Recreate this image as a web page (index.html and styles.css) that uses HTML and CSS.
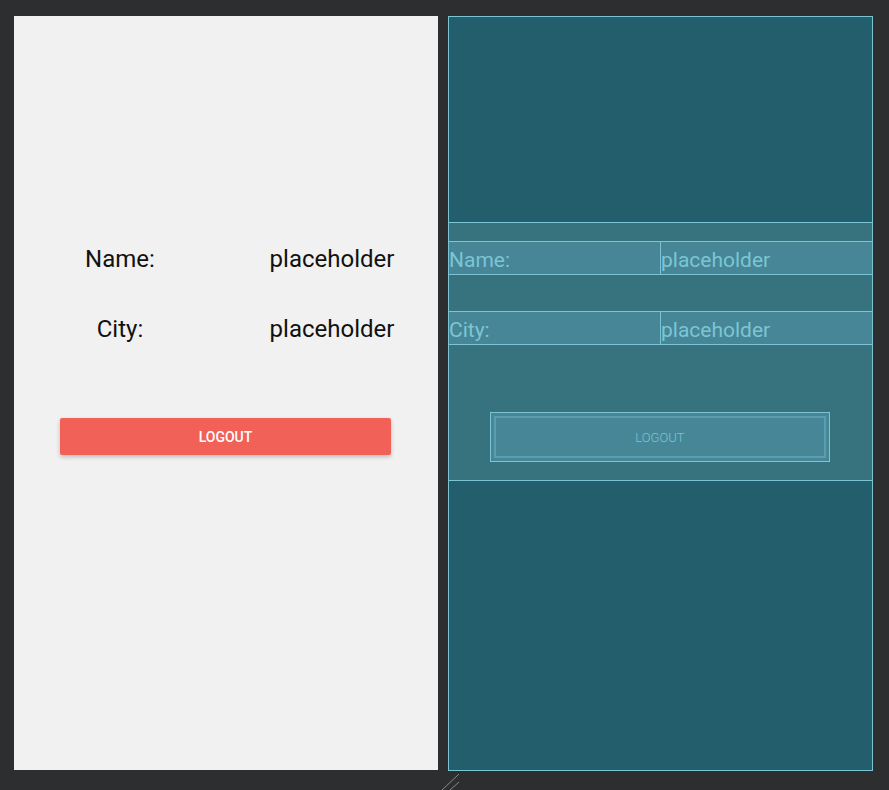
FILE: index.html
```html
<!DOCTYPE html>
<html>
<head>
<meta charset="utf-8">
<link rel="stylesheet" href="styles.css">
</head>
<body>
<div class="stage">
  <div class="phone design">
    <div class="layout">
      <div class="row">
        <div class="cell">Name:</div>
        <div class="cell">placeholder</div>
      </div>
      <div class="row">
        <div class="cell">City:</div>
        <div class="cell">placeholder</div>
      </div>
      <div class="btn-wrap">
        <div class="btn">LOGOUT</div>
      </div>
    </div>
  </div>
  <div class="phone blueprint">
    <div class="layout">
      <div class="row">
        <div class="cell">Name:</div>
        <div class="cell">placeholder</div>
      </div>
      <div class="row">
        <div class="cell">City:</div>
        <div class="cell">placeholder</div>
      </div>
      <div class="btn-wrap">
        <div class="btn"><span class="btn-inner">LOGOUT</span></div>
      </div>
    </div>
  </div>
</div>
<svg class="resize" width="20" height="18" viewBox="0 0 20 18">
  <line x1="2" y1="17" x2="19" y2="1" stroke="#8a8a8a" stroke-width="1"/>
  <line x1="10" y1="17" x2="19" y2="9" stroke="#8a8a8a" stroke-width="1"/>
</svg>
</body>
</html>
```
FILE: styles.css
```css
html, body {
  margin: 0;
  padding: 0;
  background: #2d2e30;
  width: 889px;
  height: 790px;
  overflow: hidden;
  font-family: Roboto, "Liberation Sans", sans-serif;
}
.stage {
  display: flex;
  gap: 10px;
  padding: 16px 0 0 14px;
}
.phone {
  box-sizing: border-box;
  height: 755px;
}
.design {
  width: 424px;
  height: 754px;
  background: #f1f1f1;
  padding-top: 206px;
}
.blueprint {
  width: 425px;
  background: #225e6c;
  border: 1px solid #7cc3d3;
  padding-top: 205px;
}
.layout {
  box-sizing: border-box;
  height: 258px;
  padding-top: 19px;
  display: flex;
  flex-direction: column;
}
.blueprint .layout {
  background: #36737f;
  border-top: 1px solid #7cc3d3;
  border-bottom: 1px solid #7cc3d3;
  height: 259px;
  padding-top: 18px;
}
.row {
  display: flex;
  height: 33px;
  margin-bottom: 37px;
}
.row + .row {
  margin-bottom: 0;
}
.cell {
  flex: 1;
  box-sizing: border-box;
  display: flex;
  align-items: center;
  justify-content: center;
  font-size: 24px;
  color: #111;
  padding-top: 2px;
}
.blueprint .row {
  box-sizing: border-box;
  background: #468697;
  border-top: 1px solid #7cc3d3;
  border-bottom: 1px solid #7cc3d3;
  height: 34px;
  margin-bottom: 36px;
}
.blueprint .row + .row {
  margin-bottom: 0;
}
.blueprint .cell {
  justify-content: flex-start;
  font-size: 21px;
  color: #7cc5d5;
  padding-top: 3px;
}
.blueprint .cell + .cell {
  border-left: 1px solid #7cc3d3;
}
.btn-wrap {
  margin-top: 68px;
  padding: 0 47px 0 46px;
}
.btn {
  height: 37px;
  margin-top: 6px;
  background: #f26158;
  color: #fff;
  font-size: 14px;
  font-weight: 500;
  display: flex;
  align-items: center;
  justify-content: center;
  border-radius: 2px;
  box-shadow: 0 2px 4px rgba(0, 0, 0, 0.22);
}
.blueprint .btn-wrap {
  padding: 0 42px 0 41px;
  margin-top: 67px;
}
.blueprint .btn {
  margin-top: 0;
  height: 50px;
  box-sizing: border-box;
  background: #468697;
  border: 1px solid #7cc3d3;
  border-radius: 0;
  box-shadow: none;
  padding: 3px;
  display: flex;
  align-items: stretch;
}
.btn-inner {
  flex: 1;
  display: flex;
  align-items: center;
  justify-content: center;
  border: 2px solid #5a9daf;
  color: #7cc5d5;
  font-size: 13px;
  font-weight: 300;
}
.resize {
  position: absolute;
  left: 440px;
  top: 773px;
}
```
